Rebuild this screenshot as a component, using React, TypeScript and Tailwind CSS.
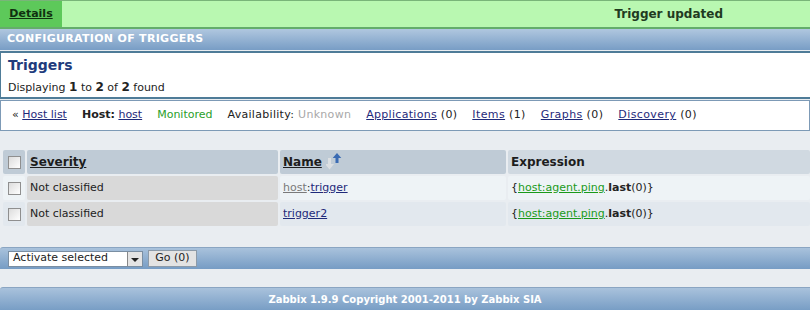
import React from 'react';

const font = { fontFamily: '"DejaVu Sans", Verdana, sans-serif' };

function Check() {
  return <span className="block h-[13px] w-[13px] border border-[#8f8f8f] bg-gradient-to-br from-[#dcdcdc] to-[#ffffff]" />;
}

function SortIcon() {
  return (
    <svg width="16" height="18" viewBox="0 0 16 18" className="ml-[4px] mt-[3px] self-start">
      <path d="M2 5 h3 v6 h3 l-4.5 5.5 l-4.5 -5.5 h3 z" fill="#dcdfe2" />
      <path d="M9.5 10 h3 v-5 h2.8 l-4.3 -5 l-4.3 5 h2.8 z" fill="#3a6bb3" />
    </svg>
  );
}

function Expr() {
  return (
    <span className="text-[#222]">
      {'{'}
      <a className="text-[#1a9a1a] underline">host:agent.ping</a>.<b>last</b>(0){'}'}
    </span>
  );
}

const cell = 'flex items-center rounded-[2px] pl-[3px]';
const link = 'text-[#1f2a7a] underline';

export default function App() {
  return (
    <div className="h-[310px] w-[810px] overflow-hidden bg-[#e9edf1] text-[11px] text-[#222]" style={font}>
      <div className="flex h-[29px] border-t border-b-2 border-t-[#79b579] border-b-[#64ad6c] bg-[#b9f8b1]">
        <div className="flex w-[62px] items-center justify-center bg-[#5dc95a] font-bold text-[#10300f] underline">Details</div>
        <div className="ml-auto flex items-center pr-[87px] text-[12px] font-bold text-[#1f3a1f]">Trigger updated</div>
      </div>
      <div className="flex h-[21px] items-center bg-gradient-to-b from-[#b0c7df] to-[#789dc5] pl-[7px] font-bold tracking-[0.3px] text-white">
        CONFIGURATION OF TRIGGERS
      </div>
      <div className="mt-px h-[48px] border-y-2 border-l border-[#4f7c98] bg-white px-[7px]">
        <div className="pt-[2px] text-[14px] font-bold text-[#213b7c]">Triggers</div>
        <div className="mt-[2px]">
          Displaying <b className="text-[12px]">1</b> to <b className="text-[12px]">2</b> of <b className="text-[12px]">2</b> found
        </div>
      </div>
      <div className="mt-px flex h-[31px] items-center gap-[15px] border border-[#7d9ab6] bg-white pl-[11px]">
        <span>
          « <a className={link}>Host list</a>
        </span>
        <span>
          <b>Host:</b> <a className={link}>host</a>
        </span>
        <span className="text-[#2aa02a]">Monitored</span>
        <span className="tracking-[0.3px]">
          Availability: <span className="text-[#a8a8a8]">Unknown</span>
        </span>
        <span className="tracking-[0.3px]">
          <a className={link}>Applications</a> (0)
        </span>
        <span className="tracking-[0.4px]">
          <a className={link}>Items</a> (1)
        </span>
        <span className="tracking-[0.4px]">
          <a className={link}>Graphs</a> (0)
        </span>
        <span className="tracking-[0.4px]">
          <a className={link}>Discovery</a> (0)
        </span>
      </div>
      <div className="mt-[19px] grid grid-cols-[22px_251px_226px_1fr] auto-rows-[24px] gap-[2px] pl-[3px]">
        <div className={`${cell} justify-center bg-[#bfcbd6] !pl-0`}><Check /></div>
        <div className={`${cell} bg-[#bfcbd6] text-[12px] font-bold text-[#1d1d1d] underline`}>Severity</div>
        <div className={`${cell} bg-[#bfcbd6] text-[12px] font-bold text-[#1d1d1d]`}>
          <span className="underline">Name</span>
          <SortIcon />
        </div>
        <div className={`${cell} bg-[#d0d9e1] text-[12px] font-bold text-[#1d1d1d]`}>Expression</div>

        <div className={`${cell} justify-center bg-[#eef3f6] !pl-0`}><Check /></div>
        <div className={`${cell} bg-[#d9d9d9]`}>Not classified</div>
        <div className={`${cell} bg-[#eef3f6]`}>
          <a className="text-[#7a7a7a] underline">host</a>:<a className={link}>trigger</a>
        </div>
        <div className={`${cell} bg-[#eef3f6]`}><Expr /></div>

        <div className={`${cell} justify-center bg-[#e2e8ee] !pl-0`}><Check /></div>
        <div className={`${cell} bg-[#d9d9d9]`}>Not classified</div>
        <div className={`${cell} bg-[#e2e8ee]`}>
          <a className={link}>trigger2</a>
        </div>
        <div className={`${cell} bg-[#e2e8ee]`}><Expr /></div>
      </div>
      <div className="mt-[21px] flex h-[22px] items-center gap-[5px] rounded-tl-[3px] border-t border-[#8aa5c2] bg-gradient-to-b from-[#a9c2dc] to-[#769cc4] pl-[8px]">
        <div className="flex h-[16px] w-[135px] items-center border border-[#7a8ea2] bg-white">
          <span className="flex-1 pl-[4px]">Activate selected</span>
          <span className="flex h-[14px] w-[15px] items-center justify-center border-l border-[#888] bg-[#e4e4e4]">
            <span className="mt-[3px] block h-0 w-0 border-x-[4px] border-t-[4px] border-x-transparent border-t-[#222]" />
          </span>
        </div>
        <div className="flex h-[17px] w-[49px] items-center justify-center border border-[#8c9aa8] bg-[#e3e3e3]">Go (0)</div>
      </div>
      <div className="mt-[18px] flex h-[24px] items-center justify-center rounded-tl-[3px] border-t border-[#8aa5c2] bg-gradient-to-b from-[#a9c2dc] to-[#769cc4] text-[10px] font-bold text-white">
        Zabbix 1.9.9 Copyright 2001-2011 by Zabbix SIA
      </div>
    </div>
  );
}
